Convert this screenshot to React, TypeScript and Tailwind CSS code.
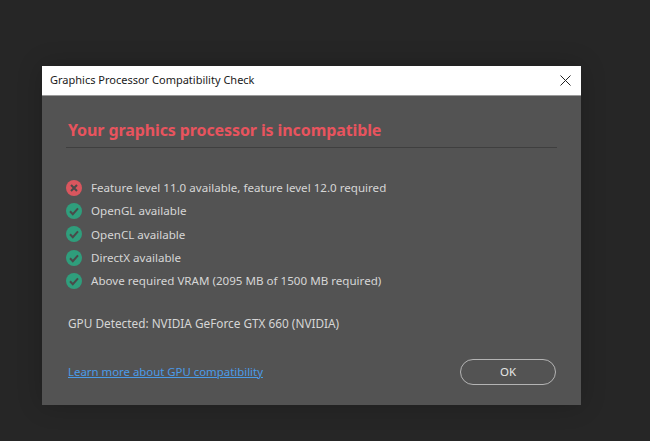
const checks = [
  { ok: false, label: 'Feature level 11.0 available, feature level 12.0 required' },
  { ok: true, label: 'OpenGL available' },
  { ok: true, label: 'OpenCL available' },
  { ok: true, label: 'DirectX available' },
  { ok: true, label: 'Above required VRAM (2095 MB of 1500 MB required)' },
];

function StatusIcon({ ok }: { ok: boolean }) {
  return (
    <svg className="w-4 h-4 shrink-0" viewBox="0 0 16 16">
      <circle cx="8" cy="8" r="8" fill={ok ? '#2f9e7c' : '#d9565e'} />
      {ok ? (
        <path d="M4 8.2l2.8 3L12 5.4" fill="none" stroke="#4a4a4a" strokeWidth="2" />
      ) : (
        <path d="M5 5l6 6M11 5l-6 6" fill="none" stroke="#4a4a4a" strokeWidth="2" />
      )}
    </svg>
  );
}

export default function App() {
  return (
    <div className="h-[441px] w-[650px] overflow-hidden bg-[#262626] pt-[66px] pl-[42px] font-['Noto_Sans',sans-serif]">
      <div className="w-[539px] h-[339px] bg-[#535353] shadow-[0_0_24px_rgba(0,0,0,0.2)] flex flex-col">
        {/* Title bar */}
        <div className="h-[30px] bg-white border-b border-[#9a9a9a] flex items-center justify-between pl-2 pr-[10px] shrink-0">
          <span className="text-[11px] text-[#1a1a1a]">Graphics Processor Compatibility Check</span>
          <svg className="w-[11px] h-[11px]" viewBox="0 0 11 11">
            <path d="M0.5 0.5l10 10M10.5 0.5l-10 10" stroke="#222" strokeWidth="1" fill="none" />
          </svg>
        </div>

        <div className="flex-1 flex flex-col px-6">
          <h1 className="mt-[24px] ml-[2px] text-[16px] leading-[20px] font-bold tracking-[-0.1px] text-[#e8545e]">
            Your graphics processor is incompatible
          </h1>
          <div className="mt-[7px] h-px bg-[#3f3f3f] w-[491px]" />

          <ul className="mt-[31.5px] flex flex-col gap-[7.4px]">
            {checks.map((c) => (
              <li key={c.label} className="flex items-center gap-[9px] h-[16px] text-[11.6px] text-[#d6d6d6]">
                <StatusIcon ok={c.ok} />
                <span>{c.label}</span>
              </li>
            ))}
          </ul>

          <p className="mt-[25.5px] ml-[2px] text-[11.8px] leading-[16px] text-[#d6d6d6]">
            GPU Detected: NVIDIA GeForce GTX 660 (NVIDIA)
          </p>

          <div className="mt-[28px] flex items-center justify-between w-[488px] ml-[2px]">
            <a className="text-[11.4px] text-[#4b9be8] underline">Learn more about GPU compatibility</a>
            <button className="w-[96px] h-[26px] rounded-full border-[1.5px] border-[#b4b4b4] text-[11.5px] text-[#e6e6e6]">
              OK
            </button>
          </div>
        </div>
      </div>
    </div>
  );
}
